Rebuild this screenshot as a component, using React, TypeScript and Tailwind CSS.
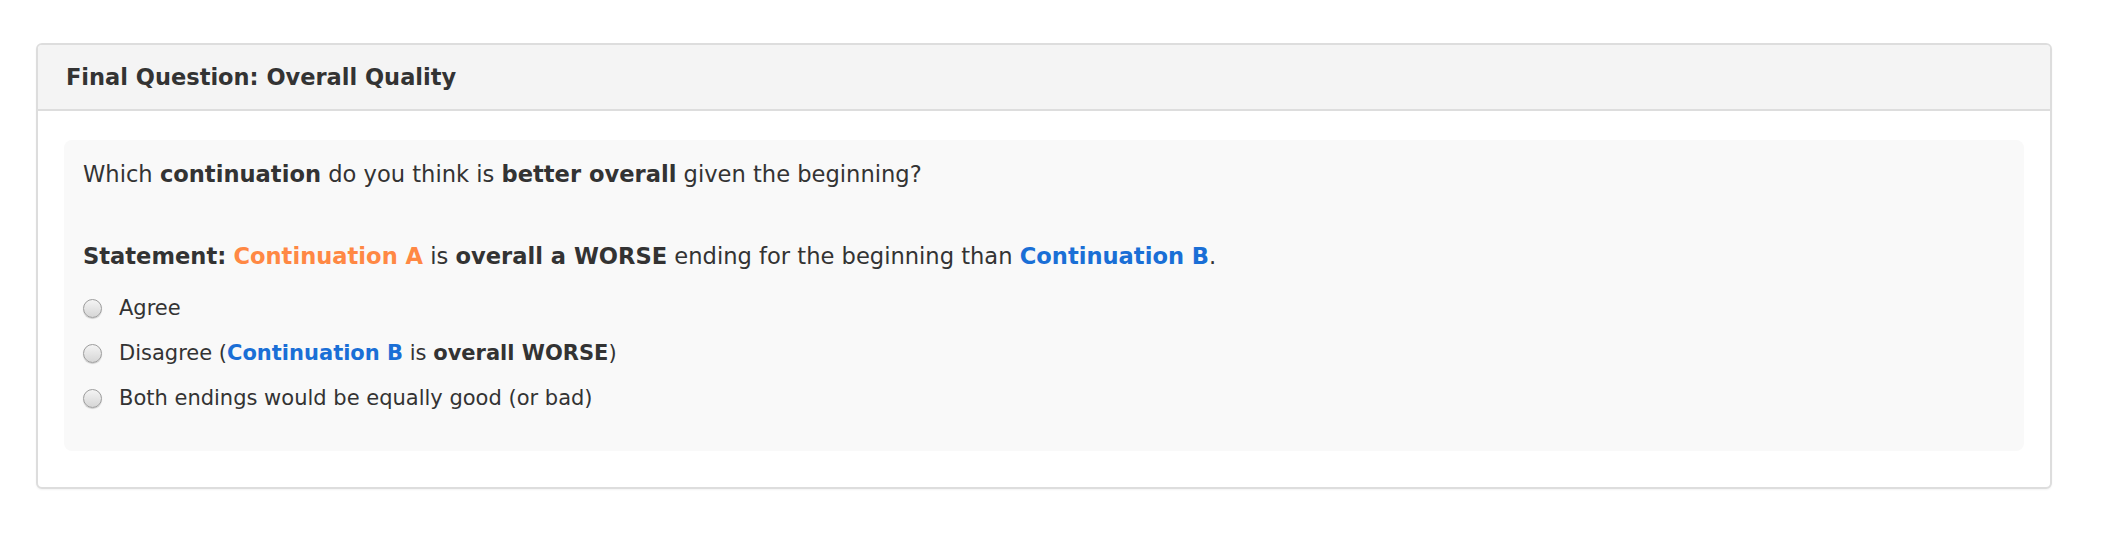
const OPTIONS = ['agree', 'disagree', 'equal'] as const;

function Radio() {
  return (
    <span className="w-[19px] h-[19px] shrink-0 rounded-full border border-[#9d9d9d] bg-gradient-to-b from-[#f4f4f4] to-[#d6d6d6] shadow-[0_1px_1px_rgba(0,0,0,0.18)]" />
  );
}

function Option({ id }: { id: (typeof OPTIONS)[number] }) {
  return (
    <label className="flex items-center gap-[17px] h-[32px] text-[21px]">
      <Radio />
      {id === 'agree' && <span>Agree</span>}
      {id === 'disagree' && (
        <span>
          Disagree (<b className="text-[#1a6fd6]">Continuation B</b> is <b>overall WORSE</b>)
        </span>
      )}
      {id === 'equal' && <span>Both endings would be equally good (or bad)</span>}
    </label>
  );
}

export default function App() {
  return (
    <div className="min-h-screen bg-white pl-[36px] pr-[58px] pt-[43px] text-[22.6px] leading-[32px] text-[#333] font-['DejaVu_Sans',sans-serif]">
      <div className="border-2 border-[#dddddd] rounded-[6px] bg-white shadow-[0_1px_2px_rgba(0,0,0,0.05)] overflow-hidden">
        <div className="bg-[#f4f4f4] border-b-2 border-[#dddddd] pl-[28px] py-[16px] font-bold text-[22.5px]">
          Final Question: Overall Quality
        </div>

        <div className="pt-[29px] px-[26px] pb-[36px]">
          <div className="bg-[#f9f9f9] rounded-[8px] pl-[19px] pr-4 pt-[18px] pb-[37px]">
            <p>
              Which <b>continuation</b> do you think is <b>better overall</b> given the beginning?
            </p>

            <p className="mt-[50px]">
              <b>Statement:</b> <b className="text-[#ff8844]">Continuation A</b> is{' '}
              <b>overall a WORSE</b> ending for the beginning than{' '}
              <b className="text-[#1a6fd6]">Continuation B</b>.
            </p>

            <div className="mt-[20px] flex flex-col gap-[13px]">
              {OPTIONS.map((id) => (
                <Option key={id} id={id} />
              ))}
            </div>
          </div>
        </div>
      </div>
    </div>
  );
}
